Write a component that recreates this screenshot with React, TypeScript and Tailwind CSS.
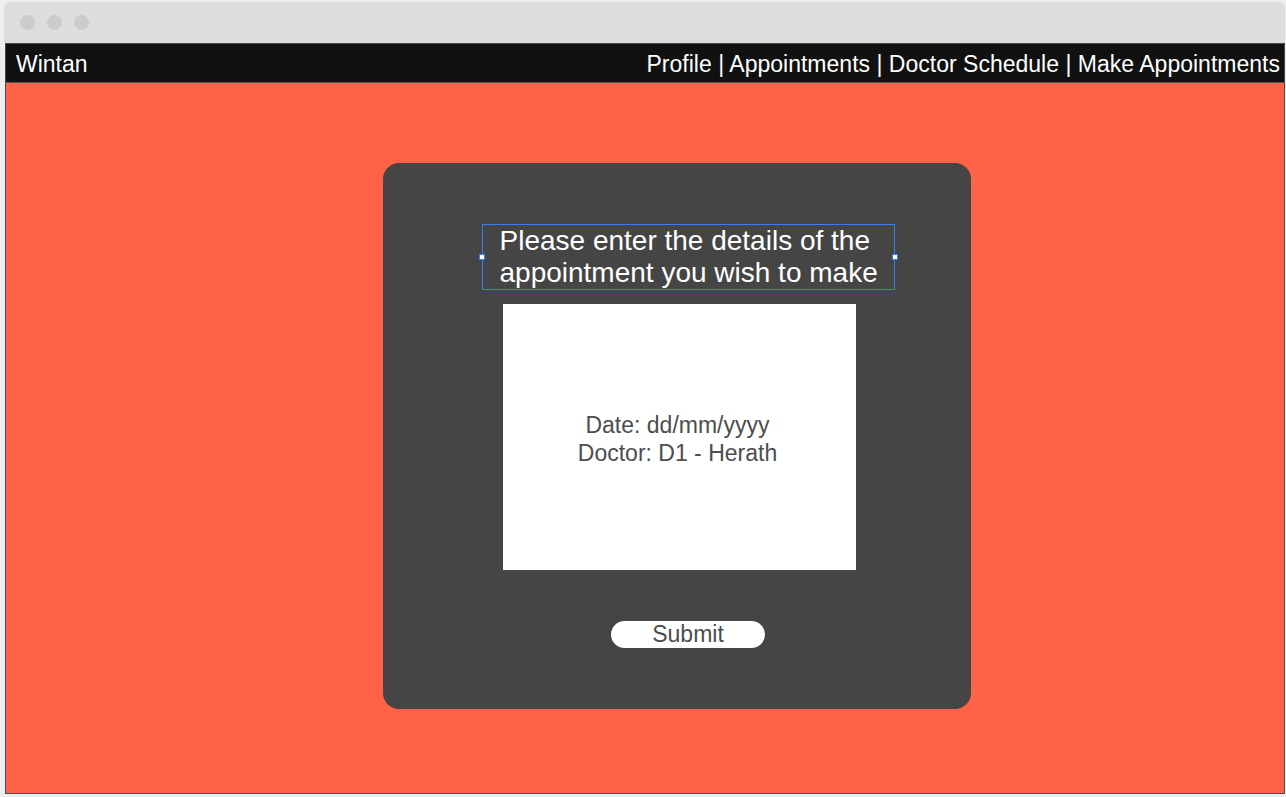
export default function App() {
  const font = { fontFamily: '"Liberation Sans", Arial, sans-serif' };
  return (
    <div className="w-[1286px] h-[797px] bg-[#eeeeee] pt-[2px] pl-[4px] pr-[2px] overflow-hidden" style={font}>
      <div className="flex flex-col w-[1281px] h-[792px]">
        <div className="h-[41px] bg-[#dddddd] rounded-t-[6px] flex items-center gap-[12px] pl-[16px] shrink-0">
          <div className="w-[15px] h-[15px] rounded-full bg-[#cccccc]" />
          <div className="w-[15px] h-[15px] rounded-full bg-[#cccccc]" />
          <div className="w-[15px] h-[15px] rounded-full bg-[#cccccc]" />
        </div>
        <div className="flex-1 flex flex-col border border-[#4a4a4a] ml-[1px] bg-[#ff6347]">
          <div className="h-[39px] bg-[#111111] border-b border-[#555555] flex items-center justify-between pl-[10px] pr-[4px] pt-[3px] text-white text-[23px] leading-none shrink-0">
            <span>Wintan</span>
            <span className="tracking-[0.01px]">Profile | Appointments | Doctor Schedule | Make Appointments</span>
          </div>
          <div className="flex-1 flex justify-center pt-[80px] pl-[64px]">
            <div className="w-[588px] h-[546px] bg-[#454545] rounded-[16px] flex flex-col items-center pt-[61px]">
              <div className="relative w-[413px] h-[66px] border border-[#3b7cf0] flex items-center justify-start pl-[17px] ml-[22px]">
                <div className="text-white text-[28px] leading-[32px] text-left">
                  Please enter the details of the
                  <br />
                  appointment you wish to make
                </div>
                <div className="absolute left-[-4px] top-[29px] w-[6px] h-[6px] bg-white border border-[#3b7cf0]" />
                <div className="absolute right-[-4px] top-[29px] w-[6px] h-[6px] bg-white border border-[#3b7cf0]" />
              </div>
              <div className="w-[353px] h-[266px] bg-white mt-[14px] ml-[5px] flex items-center justify-center pt-[4px] pr-[4px]">
                <div className="text-[#4d4d4d] text-[23px] leading-[28px] text-center">
                  Date: dd/mm/yyyy
                  <br />
                  Doctor: D1 - Herath
                </div>
              </div>
              <div className="mt-[51px] ml-[22px] w-[154px] h-[27px] bg-white rounded-full flex items-center justify-center text-[#4d4d4d] text-[23px] leading-none">
                Submit
              </div>
            </div>
          </div>
        </div>
      </div>
    </div>
  );
}
